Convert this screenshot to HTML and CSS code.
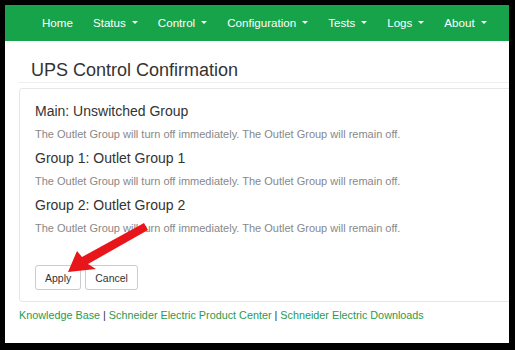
FILE: index.html
```html
<!DOCTYPE html>
<html>
<head>
<meta charset="utf-8">
<link rel="stylesheet" href="styles.css">
</head>
<body>
<div class="frame">
  <nav class="navbar">
    <span class="nav-item">Home</span>
    <span class="nav-item">Status <i class="caret"></i></span>
    <span class="nav-item">Control <i class="caret"></i></span>
    <span class="nav-item">Configuration <i class="caret"></i></span>
    <span class="nav-item">Tests <i class="caret"></i></span>
    <span class="nav-item">Logs <i class="caret"></i></span>
    <span class="nav-item">About <i class="caret"></i></span>
  </nav>
  <div class="content">
    <h1 class="page-title">UPS Control Confirmation</h1>
    <div class="panel">
      <h2 class="group-title">Main: Unswitched Group</h2>
      <p class="group-text">The Outlet Group will turn off immediately. The Outlet Group will remain off.</p>
      <h2 class="group-title">Group 1: Outlet Group 1</h2>
      <p class="group-text">The Outlet Group will turn off immediately. The Outlet Group will remain off.</p>
      <h2 class="group-title">Group 2: Outlet Group 2</h2>
      <p class="group-text">The Outlet Group will turn off immediately. The Outlet Group will remain off.</p>
      <div class="actions">
        <button class="btn">Apply</button>
        <button class="btn">Cancel</button>
      </div>
    </div>
    <div class="footer">
      <a class="link">Knowledge Base</a> <span class="sep">|</span> <a class="link">Schneider Electric Product Center</a> <span class="sep">|</span> <a class="link">Schneider Electric Downloads</a>
    </div>
  </div>
  <svg class="arrow" width="100" height="60" viewBox="60 220 100 60">
    <polygon fill="#e8161b" points="68,272 77,251 82,257 144,223 148,230 88,264 96,269"/>
  </svg>
</div>
</body>
</html>
```

FILE: styles.css
```css
html, body {
  margin: 0;
  padding: 0;
  background: #000;
}
body {
  padding: 5px 6px 7px 5px;
  font-family: "Liberation Sans", Arial, sans-serif;
}
.frame {
  position: relative;
  width: 504px;
  height: 338px;
  background: #fff;
  overflow: hidden;
}
.navbar {
  height: 36px;
  box-sizing: border-box;
  padding-bottom: 2px;
  background: #17a34a;
  display: flex;
  align-items: center;
  padding-left: 37px;
}
.nav-item {
  color: #fff;
  font-size: 11.6px;
  margin-right: 20px;
  white-space: nowrap;
  display: flex;
  align-items: center;
}
.caret {
  display: inline-block;
  width: 0;
  height: 0;
  border-left: 3.5px solid transparent;
  border-right: 3.5px solid transparent;
  border-top: 3.5px solid #fff;
  margin-left: 6px;
  margin-top: 1px;
}
.content {
  padding: 0 0 0 14px;
}
.page-title {
  font-weight: normal;
  font-size: 18px;
  color: #333;
  margin: 0;
  padding: 17px 0 0 12px;
  height: 24px;
  border-bottom: 1px solid #eee;
  line-height: 24px;
}
.panel {
  margin-top: 5px;
  width: 520px;
  border: 1px solid #e6e6e6;
  border-radius: 3px;
  padding: 12px 15px 11px 15px;
  box-sizing: border-box;
}
.group-title {
  font-weight: normal;
  font-size: 14px;
  color: #333;
  margin: 0;
  line-height: 20px;
}
.group-text {
  font-size: 11px;
  color: #888;
  margin: 7px 0 7px 0;
  line-height: 13px;
}
.actions {
  margin-top: 30px;
  display: flex;
  gap: 4px;
}
.btn {
  font-family: "Liberation Sans", Arial, sans-serif;
  font-size: 10.5px;
  color: #333;
  background: #fff;
  border: 1px solid #ccc;
  border-radius: 3px;
  height: 25px;
  padding: 0 9px;
}
.footer {
  margin-top: 6px;
  font-size: 10.8px;
  line-height: 15px;
  color: #333;
}
.link {
  color: #2a9a4e;
}
.arrow {
  position: absolute;
  left: 55px;
  top: 215px;
}
```
